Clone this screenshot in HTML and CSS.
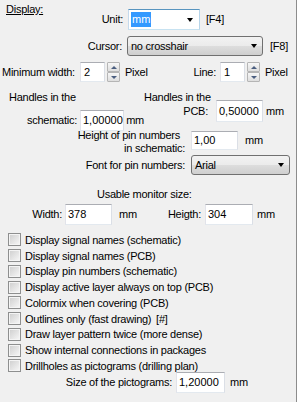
FILE: index.html
```html
<!DOCTYPE html>
<html lang="en">
<head>
  <meta charset="UTF-8" />
  <meta name="viewport" content="width=device-width, initial-scale=1" />
  <title>Display options</title>
  <link rel="stylesheet" href="styles.css">
</head>
<body>
  <div class="panel">

    <div class="row row-unit">
      <div class="lead">
        <span class="title">Display:</span>
        <span class="lbl">Unit:</span>
      </div>
      <div class="combo edit focus w-unit">
        <span class="val"><span class="sel">mm</span></span>
        <span class="arrow"></span>
      </div>
      <span class="key k-f4">[F4]</span>
    </div>

    <div class="row row-cursor">
      <span class="lbl l-cursor">Cursor:</span>
      <div class="combo list w-cursor">
        <span class="val">no crosshair</span>
        <span class="arrow"></span>
      </div>
      <span class="key k-f8">[F8]</span>
    </div>

    <div class="row row-min">
      <span class="lbl l-min">Minimum width:</span>
      <div class="edit w-spin">2</div>
      <div class="spin"><span class="up"></span><span class="down"></span></div>
      <span class="unit u-pixel">Pixel</span>
      <span class="lbl l-line">Line:</span>
      <div class="edit w-spin">1</div>
      <div class="spin"><span class="up"></span><span class="down"></span></div>
      <span class="unit u-pixel2">Pixel</span>
    </div>

    <div class="handles">
      <div class="hcol hcol-sch">
        <span class="cap">Handles in the</span>
        <div class="row row-sch">
          <span class="lbl l-sch">schematic:</span>
          <div class="edit w-num">1,00000</div>
          <span class="unit u-sch">mm</span>
        </div>
      </div>
      <div class="hcol hcol-pcb">
        <span class="cap">Handles in the</span>
        <div class="row row-pcb">
          <span class="lbl l-pcb">PCB:</span>
          <div class="edit w-num2">0,50000</div>
          <span class="unit u-pcb">mm</span>
        </div>
      </div>
    </div>

    <div class="row row-pinh">
      <div class="lbl l-pinh">
        <span class="ln1">Height of pin numbers</span>
        <span>in schematic:</span>
      </div>
      <div class="edit w-pinh">1,00</div>
      <span class="unit u-pinh">mm</span>
    </div>

    <div class="row row-font">
      <span class="lbl l-font">Font for pin numbers:</span>
      <div class="combo list w-font">
        <span class="val">Arial</span>
        <span class="arrow"></span>
      </div>
    </div>

    <div class="usable">Usable monitor size:</div>

    <div class="row row-size">
      <span class="lbl l-width">Width:</span>
      <div class="edit w-mon">378</div>
      <span class="unit u-width">mm</span>
      <span class="lbl l-height">Heigth:</span>
      <div class="edit w-mon2">304</div>
      <span class="unit u-height">mm</span>
    </div>

    <div class="checks">
      <div class="check"><span class="box"></span><span>Display signal names (schematic)</span></div>
      <div class="check"><span class="box"></span><span>Display signal names (PCB)</span></div>
      <div class="check"><span class="box"></span><span>Display pin numbers (schematic)</span></div>
      <div class="check"><span class="box"></span><span>Display active layer always on top (PCB)</span></div>
      <div class="check"><span class="box"></span><span>Colormix when covering (PCB)</span></div>
      <div class="check"><span class="box"></span><span>Outlines only (fast drawing) <span class="hash">[#]</span></span></div>
      <div class="check"><span class="box"></span><span>Draw layer pattern twice (more dense)</span></div>
      <div class="check"><span class="box"></span><span>Show internal connections in packages</span></div>
      <div class="check"><span class="box"></span><span>Drillholes as pictograms (drilling plan)</span></div>
    </div>

    <div class="row row-picto">
      <span class="lbl l-picto">Size of the pictograms:</span>
      <div class="edit w-picto">1,20000</div>
      <span class="unit u-picto">mm</span>
    </div>

  </div>
</body>
</html>
```

FILE: styles.css
```css
html, body {
  margin: 0;
  padding: 0;
  width: 298px;
  height: 402px;
  overflow: hidden;
  background: #f0f0f0;
}

body {
  font-family: "Liberation Sans", Arial, sans-serif;
  font-size: 11px;
  letter-spacing: -0.25px;
  color: #000;
}

.panel {
  width: 296px;
  height: 402px;
  border-right: 1px solid #8c8c8c;
  box-shadow: 1px 0 0 #fff;
}

.row {
  display: flex;
  align-items: center;
}

.lbl, .unit, .key, .cap {
  white-space: nowrap;
  line-height: 13px;
}

.lbl {
  text-align: right;
  flex: 0 0 auto;
}

/* text boxes */
.edit {
  box-sizing: border-box;
  height: 21px;
  line-height: 19px;
  padding-left: 2px;
  background: #fff;
  border: 1px solid;
  border-color: #abadb3 #dbdfe6 #e3e9ef #e2e3ea;
  white-space: nowrap;
  letter-spacing: 0;
}

.edit.focus {
  border-color: #5794bf #b7d5ea #c7e2f1 #c5daed;
}

/* combo boxes */
.combo {
  display: flex;
  align-items: center;
}

.combo .val {
  flex: 1;
}

.combo .arrow {
  width: 0;
  height: 0;
  border-top: 4px solid #000;
  border-left: 3.5px solid transparent;
  border-right: 3.5px solid transparent;
  margin-right: 6px;
}

.combo.list {
  box-sizing: border-box;
  height: 20px;
  padding-left: 3px;
  border: 1px solid #707070;
  border-radius: 3px;
  background: linear-gradient(#f2f2f2 0%, #ebebeb 50%, #dddddd 51%, #cfcfcf 100%);
}

.combo.list .arrow {
  margin-right: 5px;
}

.sel {
  background: #3399ff;
  color: #fff;
  padding: 1px 1px 2px;
}

/* spin buttons */
.spin {
  display: flex;
  flex-direction: column;
  width: 13px;
  height: 20px;
  margin-left: 2px;
}

.spin span {
  box-sizing: border-box;
  height: 10px;
  border: 1px solid #b5b5b5;
  border-radius: 1px;
  background: linear-gradient(#f7f7f7, #dedede);
  display: flex;
  align-items: center;
  justify-content: center;
}

.spin span::after {
  content: "";
  width: 0;
  height: 0;
  border-left: 3px solid transparent;
  border-right: 3px solid transparent;
}

.spin .up::after {
  border-bottom: 3px solid #4b5e80;
}

.spin .down::after {
  border-top: 3px solid #4b5e80;
}

/* unit + key row */
.row-unit {
  height: 30px;
  align-items: flex-end;
}

.lead {
  width: 123px;
  height: 30px;
  display: flex;
  justify-content: space-between;
}

.title {
  margin: 3px 0 0 6px;
  line-height: 13px;
  text-decoration: underline;
}

.lead .lbl {
  align-self: flex-end;
  line-height: 21px;
}

.w-unit {
  width: 72px;
  margin-left: 5px;
}

.k-f4 {
  margin-left: 6px;
  line-height: 21px;
}

.row-cursor {
  height: 20px;
  margin-top: 6px;
}

.l-cursor {
  width: 122px;
}

.w-cursor {
  width: 136px;
  margin-left: 5px;
}

.k-f8 {
  margin-left: 7px;
}

/* minimum width / line */
.row-min {
  height: 20px;
  margin-top: 6px;
}

.row-min .edit {
  height: 20px;
  line-height: 18px;
  padding-left: 3px;
}

.l-min {
  width: 78px;
  padding-left: 2px;
  text-align: left;
}

.w-spin {
  width: 25px;
}

.u-pixel {
  width: 66px;
  margin-left: 5px;
}

.l-line {
  width: 25px;
}

.row-min .l-line + .edit {
  margin-left: 4px;
}

.u-pixel2 {
  margin-left: 5px;
}

/* handles */
.handles {
  display: flex;
  align-items: flex-start;
  margin-top: 9px;
  height: 40px;
}

.hcol {
  display: flex;
  flex-direction: column;
}

.hcol-sch {
  width: 144px;
}

.hcol-sch .cap {
  padding-left: 9px;
}

.row-sch {
  height: 21px;
  margin-top: 6px;
}

.l-sch {
  width: 77px;
}

.w-num {
  width: 48px;
  margin-left: 3px;
}

.u-sch {
  margin-left: 2px;
}

.row-pcb {
  height: 22px;
  margin-top: -4px;
}

.row-pcb .edit {
  height: 22px;
  line-height: 20px;
}

.l-pcb {
  width: 64px;
}

.w-num2 {
  width: 47px;
  margin-left: 8px;
}

.u-pcb {
  margin-left: 3px;
}

/* pin number height */
.row-pinh {
  align-items: flex-start;
  height: 26px;
  margin-top: -2px;
}

.l-pinh {
  width: 185px;
  display: flex;
  flex-direction: column;
  align-items: flex-end;
}

.l-pinh .ln1 {
  padding-right: 5px;
}

.w-pinh {
  width: 47px;
  height: 19px;
  line-height: 17px;
  margin: 2px 0 0 6px;
}

.u-pinh {
  margin: 2px 0 0 7px;
  line-height: 19px;
}

.row-font {
  height: 20px;
}

.l-font {
  width: 185px;
}

.w-font {
  width: 99px;
  margin-left: 6px;
}

/* monitor size */
.usable {
  margin-top: 13px;
  padding-left: 97px;
  line-height: 13px;
  white-space: nowrap;
}

.row-size {
  height: 21px;
  margin-top: 3px;
}

.l-width {
  width: 62px;
}

.w-mon {
  width: 47px;
  margin-left: 3px;
}

.u-width {
  width: 47px;
  margin-left: 7px;
}

.l-height {
  width: 35px;
}

.w-mon2 {
  width: 48px;
  margin-left: 4px;
}

.u-height {
  margin-left: 4px;
}

/* check boxes */
.checks {
  margin-top: 7px;
  display: flex;
  flex-direction: column;
}

.check {
  display: flex;
  align-items: center;
  height: 15.75px;
  white-space: nowrap;
}

.check .box {
  box-sizing: border-box;
  width: 13px;
  height: 13px;
  margin: 0 4px 0 8px;
  border: 1px solid #8e8f8f;
  background: linear-gradient(135deg, #cdcdcd, #f8f8f8);
  box-shadow: inset 0 0 0 1px #f4f4f4;
}

.hash {
  margin-left: 2px;
}

/* pictogram size */
.row-picto {
  height: 21px;
  margin-top: -2px;
}

.l-picto {
  width: 172px;
}

.w-picto {
  width: 49px;
  margin-left: 4px;
}

.u-picto {
  margin-left: 5px;
}
```
